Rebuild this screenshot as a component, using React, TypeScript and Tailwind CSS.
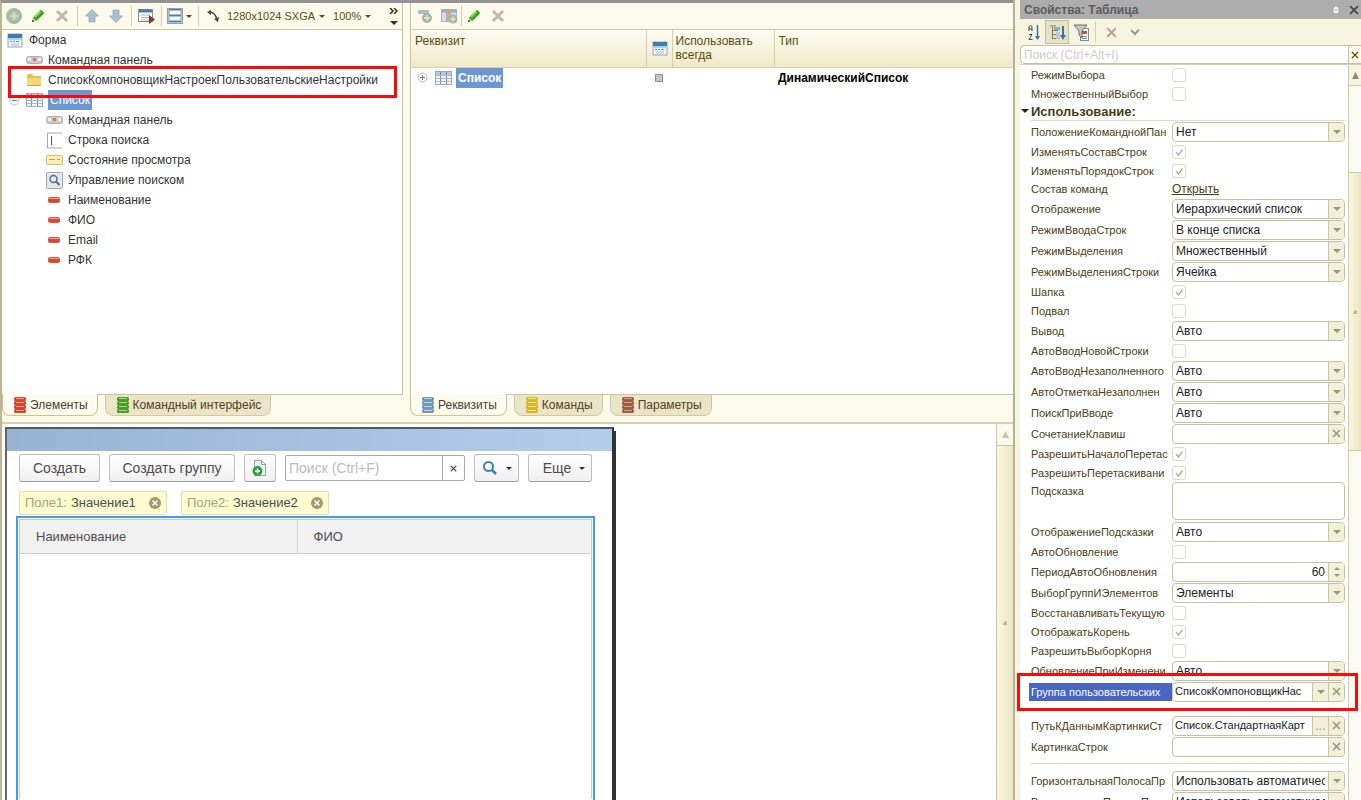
import type { ReactNode } from 'react';

type IconProps = { className?: string };

type Field = {
  kind: 'check' | 'select' | 'text' | 'number' | 'link' | 'area' | 'heading' | 'divider' | 'group' | 'path';
  label?: string;
  value?: string;
  checked?: boolean;
};

const fields: Field[] = [
  { kind: 'check', label: 'РежимВыбора' },
  { kind: 'check', label: 'МножественныйВыбор' },
  { kind: 'heading', label: 'Использование:' },
  { kind: 'select', label: 'ПоложениеКоманднойПан', value: 'Нет' },
  { kind: 'check', label: 'ИзменятьСоставСтрок', checked: true },
  { kind: 'check', label: 'ИзменятьПорядокСтрок', checked: true },
  { kind: 'link', label: 'Состав команд', value: 'Открыть' },
  { kind: 'select', label: 'Отображение', value: 'Иерархический список' },
  { kind: 'select', label: 'РежимВводаСтрок', value: 'В конце списка' },
  { kind: 'select', label: 'РежимВыделения', value: 'Множественный' },
  { kind: 'select', label: 'РежимВыделенияСтроки', value: 'Ячейка' },
  { kind: 'check', label: 'Шапка', checked: true },
  { kind: 'check', label: 'Подвал' },
  { kind: 'select', label: 'Вывод', value: 'Авто' },
  { kind: 'check', label: 'АвтоВводНовойСтроки' },
  { kind: 'select', label: 'АвтоВводНезаполненного', value: 'Авто' },
  { kind: 'select', label: 'АвтоОтметкаНезаполнен', value: 'Авто' },
  { kind: 'select', label: 'ПоискПриВводе', value: 'Авто' },
  { kind: 'text', label: 'СочетаниеКлавиш', value: '' },
  { kind: 'check', label: 'РазрешитьНачалоПеретас', checked: true },
  { kind: 'check', label: 'РазрешитьПеретаскивани', checked: true },
  { kind: 'area', label: 'Подсказка', value: '' },
  { kind: 'select', label: 'ОтображениеПодсказки', value: 'Авто' },
  { kind: 'check', label: 'АвтоОбновление' },
  { kind: 'number', label: 'ПериодАвтоОбновления', value: '60' },
  { kind: 'select', label: 'ВыборГруппИЭлементов', value: 'Элементы' },
  { kind: 'check', label: 'ВосстанавливатьТекущую' },
  { kind: 'check', label: 'ОтображатьКорень', checked: true },
  { kind: 'check', label: 'РазрешитьВыборКорня' },
  { kind: 'select', label: 'ОбновлениеПриИзменени', value: 'Авто' },
  { kind: 'group', label: 'Группа пользовательских', value: 'СписокКомпоновщикНас' },
  { kind: 'divider' },
  { kind: 'path', label: 'ПутьКДаннымКартинкиСт', value: 'Список.СтандартнаяКарт' },
  { kind: 'text', label: 'КартинкаСтрок', value: '' },
  { kind: 'divider' },
  { kind: 'select', label: 'ГоризонтальнаяПолосаПр', value: 'Использовать автоматическ' },
  { kind: 'select', label: 'ВертикальнаяПолосаПрок', value: 'Использовать автоматическ' },
];

function FormIcon({ className = 'h-4 w-4' }: IconProps) {
  return (
    <svg viewBox="0 0 16 16" className={className} aria-hidden="true">
      <rect x="1" y="2" width="14" height="13" fill="#edf3f8" stroke="#8fa9bd" />
      <rect x="1" y="2" width="14" height="4" fill="#3f7ca8" />
      <path d="M1 7h14" stroke="#a8d2ea" strokeWidth="2" />
      <path d="M3 9.500h2M6 9.500h2M9 9.500h3" stroke="#5c93ba" />
      <rect x="4" y="11" width="8" height="3" fill="#d5d9dd" />
    </svg>
  );
}

function CommandBarIcon() {
  return (
    <svg viewBox="0 0 17 8" className="h-2 w-[17px]" aria-hidden="true">
      <rect x="0.500" y="0.500" width="16" height="7" rx="2" fill="#c9c9c9" stroke="#b0b0b0" />
      <rect x="2" y="2" width="3" height="3" fill="#f5f5f5" />
      <rect x="7" y="2" width="3" height="3" fill="#ef6b52" />
      <rect x="12" y="2" width="3" height="3" fill="#f5f5f5" />
    </svg>
  );
}

function FolderIcon() {
  return (
    <svg viewBox="0 0 16 14" className="h-[14px] w-4" aria-hidden="true">
      <path d="M1 3l1-2h4l1.500 2H15v10H1z" fill="#e6bd50" />
      <path d="M1 5h14v8H1z" fill="#f5d777" />
      <path d="M1 12.500h14" stroke="#d9ab3c" />
    </svg>
  );
}

function TableIcon() {
  return (
    <svg viewBox="0 0 17 14" className="h-[14px] w-[17px]" aria-hidden="true">
      <rect x="0.500" y="0.500" width="16" height="13" fill="#f2f5f8" stroke="#9aaabb" />
      <path d="M1 1h15v3H1z" fill="#b8cbdd" />
      <path d="M5.500 1v12M11.500 1v12" stroke="#7489a0" />
      <path d="M1 4.500h15M1 7.500h15M1 10.500h15" stroke="#a9b8c8" />
    </svg>
  );
}

function SearchLineIcon() {
  return (
    <svg viewBox="0 0 17 17" className="h-[17px] w-[17px]" aria-hidden="true">
      <path d="M16 1H1.500v15H16" fill="none" stroke="#a9a9a9" />
      <path d="M5.500 4v9" stroke="#555" />
    </svg>
  );
}

function ViewStateIcon() {
  return (
    <svg viewBox="0 0 17 10" className="h-[10px] w-[17px]" aria-hidden="true">
      <rect x="0.500" y="0.500" width="16" height="9" rx="1.500" fill="#f8efb5" stroke="#d0bf7c" />
      <path d="M3 4.500h6M11 4.500h3" stroke="#b8a35c" />
    </svg>
  );
}

function MagnifierIcon({ className = 'h-4 w-4' }: IconProps) {
  return (
    <svg viewBox="0 0 16 16" className={className} fill="none" stroke="#3e82b5" aria-hidden="true">
      <circle cx="6.500" cy="6.500" r="4.500" strokeWidth="2" />
      <path d="M9.500 9.500l4.500 4.500" strokeWidth="2.500" />
    </svg>
  );
}

function SearchControlIcon() {
  return (
    <svg viewBox="0 0 17 17" className="h-[17px] w-[17px]" fill="none" aria-hidden="true">
      <rect x="0.500" y="0.500" width="16" height="16" rx="1" fill="#e8e8e8" stroke="#a3a3a3" />
      <circle cx="7.500" cy="7" r="3.500" stroke="#3f74a0" strokeWidth="1.500" />
      <path d="M10 9.500l3.500 3.500" stroke="#3f74a0" strokeWidth="2" />
    </svg>
  );
}

function FieldIcon() {
  return (
    <svg viewBox="0 0 12 6" className="h-[6px] w-3" aria-hidden="true">
      <rect x="0.500" y="0.500" width="11" height="5" rx="1" fill="#dc4430" stroke="#d85a48" />
      <path d="M1 1.500h10" stroke="#f59a87" />
    </svg>
  );
}

function StackIcon({ color, light }: { color: string; light: string }) {
  return (
    <svg viewBox="0 0 12 16" className="h-4 w-3 shrink-0" aria-hidden="true">
      {[0, 4, 8, 12].map((y) => (
        <g key={y}>
          <rect x="0" y={y} width="12" height="4" rx="1.500" fill={color} />
          <rect x="2" y={y + 1} width="8" height="1" fill={light} />
        </g>
      ))}
    </svg>
  );
}

function PencilIcon() {
  return (
    <svg viewBox="0 0 16 16" className="h-4 w-4" aria-hidden="true">
      <path d="M2 14l1.500-5L10 2.500q1-1 2 0l1.500 1.500q1 1 0 2L7 12.500z" fill="#37a31d" />
      <path d="M5 9l5.500-5.500" stroke="#8be069" strokeWidth="2" />
      <path d="M2 14l1.500-4L6 12.500z" fill="#dccd91" />
      <path d="M2 14l.7-2.200L4.200 13.300z" fill="#222" />
    </svg>
  );
}

function CrossIcon({ className = 'h-4 w-4 text-[#c9b3ad]' }: IconProps) {
  return (
    <svg viewBox="0 0 16 16" className={className} stroke="currentColor" fill="none" aria-hidden="true">
      <path d="M3 3l10 10M13 3L3 13" strokeWidth="3" />
    </svg>
  );
}

function ThinCross({ className = 'h-[9px] w-[9px] text-[#9a957d]' }: IconProps) {
  return (
    <svg viewBox="0 0 9 9" className={className} stroke="currentColor" fill="none" aria-hidden="true">
      <path d="M1 1l7 7M8 1L1 8" strokeWidth="1.500" />
    </svg>
  );
}

function Caret({ className = 'h-[3px] w-[6px] text-[#5c4a12]' }: IconProps) {
  return (
    <svg viewBox="0 0 6 3" preserveAspectRatio="none" className={className} fill="currentColor" aria-hidden="true">
      <path d="M0 0h6L3 3z" />
    </svg>
  );
}

function ArrowIcon({ down = false }: { down?: boolean }) {
  return (
    <svg viewBox="0 0 14 14" className="h-[14px] w-[14px]" aria-hidden="true">
      <path
        d={down ? 'M7 13.500L0.500 7H4V1h6v6h3.500z' : 'M7 .5L13.500 7H10v6H4V7H.5z'}
        fill="#a9bfce"
        stroke="#9db4c5"
      />
    </svg>
  );
}

function ExpandIcon({ open = false }: { open?: boolean }) {
  return (
    <svg viewBox="0 0 11 11" className="h-[11px] w-[11px] shrink-0" fill="none" stroke="#777" aria-hidden="true">
      <circle cx="5.500" cy="5.500" r="4.500" fill="#fafafa" stroke="#bdbdbd" />
      <path d={open ? 'M3 5.500h5' : 'M3 5.500h5M5.500 3v5'} />
    </svg>
  );
}

function Separator() {
  return <span className="h-5 w-px bg-[#d3ccae]" />;
}

function ToolButton({ label, children, className = 'w-6' }: { label: string; children: ReactNode; className?: string }) {
  return (
    <button type="button" aria-label={label} className={`flex h-6 shrink-0 items-center justify-center ${className}`}>
      {children}
    </button>
  );
}

function ElementsToolbar() {
  return (
    <div className="flex h-[27px] items-center border-b border-[#cfc9a8] bg-[#fcfaea] text-[11px] text-[#5c4a12]">
      <ToolButton label="Добавить">
        <svg viewBox="0 0 16 16" className="h-4 w-4" aria-hidden="true">
          <circle cx="8" cy="8" r="7.500" fill="#a9bba4" stroke="#a3b5a0" />
          <path d="M8 4v8M4 8h8" stroke="#d0dccb" strokeWidth="2.500" />
        </svg>
      </ToolButton>
      <ToolButton label="Изменить">
        <PencilIcon />
      </ToolButton>
      <ToolButton label="Удалить">
        <CrossIcon />
      </ToolButton>
      <span className="flex w-[6px] justify-center">
        <Separator />
      </span>
      <ToolButton label="Переместить вверх">
        <ArrowIcon />
      </ToolButton>
      <ToolButton label="Переместить вниз">
        <ArrowIcon down />
      </ToolButton>
      <span className="flex w-[6px] justify-center">
        <Separator />
      </span>
      <ToolButton label="Проверить форму">
        <svg viewBox="0 0 17 16" className="h-4 w-[17px]" aria-hidden="true">
          <rect x="0.500" y="1.500" width="14" height="12" fill="#fff" stroke="#7d8fa2" />
          <path d="M1 3h13" stroke="#517a9e" strokeWidth="3" />
          <path d="M3 7h9M3 9.500h9M3 12h9" stroke="#a9b6c3" />
          <path d="M11 7l6 4.500-6 4.500z" fill="#7b3f26" />
        </svg>
      </ToolButton>
      <span className="flex w-[6px] justify-center">
        <Separator />
      </span>
      <ToolButton label="Расположение" className="w-[31px] gap-[3px]">
        <svg viewBox="0 0 16 16" className="h-4 w-4" aria-hidden="true">
          <rect x="0.500" y="0.500" width="15" height="15" fill="#a9c0d6" stroke="#8ba2b8" />
          <path d="M2 1.500h12M2 7.500h12M2 13.500h12" stroke="#557a9f" />
          <rect x="3" y="3" width="10" height="3" fill="#fff" />
          <rect x="3" y="9" width="10" height="3" fill="#fff" />
        </svg>
        <Caret />
      </ToolButton>
      <span className="flex w-[6px] justify-center">
        <Separator />
      </span>
      <ToolButton label="Порядок обхода">
        <svg viewBox="0 0 14 14" className="h-[14px] w-[14px]" fill="none" stroke="#444" aria-hidden="true">
          <path d="M3 3c5 0 7 3 8 8" strokeWidth="1.500" />
          <path d="M5 1v5L1 3zM13 8l-1 5-4-3z" fill="#444" stroke="none" />
        </svg>
      </ToolButton>
      <button type="button" className="ml-[2px] flex items-center gap-1 whitespace-nowrap">
        1280x1024 SXGA
        <Caret />
      </button>
      <button type="button" className="ml-2 flex items-center gap-1">
        100%
        <Caret />
      </button>
      <button type="button" aria-label="Ещё команды" className="mr-1 ml-auto flex flex-col items-center gap-[7px]">
        <svg viewBox="0 0 9 6" className="h-[6px] w-[9px]" fill="none" stroke="#3b300c" aria-hidden="true">
          <path d="M1 0l3 3-3 3M5 0l3 3-3 3" strokeWidth="1.500" />
        </svg>
        <Caret className="h-1 w-2 text-[#3b300c]" />
      </button>
    </div>
  );
}

const treeItems = [
  { label: 'Командная панель', icon: <CommandBarIcon /> },
  { label: 'Строка поиска', icon: <SearchLineIcon /> },
  { label: 'Состояние просмотра', icon: <ViewStateIcon /> },
  { label: 'Управление поиском', icon: <SearchControlIcon /> },
  { label: 'Наименование', icon: <FieldIcon /> },
  { label: 'ФИО', icon: <FieldIcon /> },
  { label: 'Email', icon: <FieldIcon /> },
  { label: 'РФК', icon: <FieldIcon /> },
];

function TreeRow({ icon, label, className }: { icon: ReactNode; label: string; className: string }) {
  return (
    <li className={`flex h-5 items-center gap-1 whitespace-nowrap ${className}`}>
      <span className="flex w-5 shrink-0 justify-center">{icon}</span>
      {label}
    </li>
  );
}

function ElementsTree() {
  return (
    <ul className="flex-1 border-b border-[#c9c3a2] bg-white text-[12px] text-[#333]">
      <TreeRow icon={<FormIcon />} label="Форма" className="pl-[3px]" />
      <TreeRow icon={<CommandBarIcon />} label="Командная панель" className="pl-[22px]" />
      <li className="relative flex h-5 items-center gap-1 pl-[22px]">
        <span className="flex w-5 shrink-0 justify-center">
          <FolderIcon />
        </span>
        СписокКомпоновщикНастроекПользовательскиеНастройки
        <span className="pointer-events-none absolute -top-1 right-[5px] left-[6px] z-10 h-8 border-3 border-[#fb0a0a]" />
      </li>
      <li className="flex h-5 items-center pl-[7px]">
        <ExpandIcon open />
        <span className="flex w-7 shrink-0 justify-center">
          <TableIcon />
        </span>
        <span className="bg-[#6d97d3] px-[2px] leading-5 text-white">Список</span>
      </li>
      {treeItems.map((item) => (
        <TreeRow key={item.label} icon={item.icon} label={item.label} className="pl-[42px]" />
      ))}
    </ul>
  );
}

function PaneTab({ active, icon, children }: { active?: boolean; icon: ReactNode; children: ReactNode }) {
  return (
    <button
      type="button"
      role="tab"
      aria-selected={!!active}
      className={
        active
          ? 'relative -top-px flex h-[22px] items-center gap-1 rounded-b-lg border border-t-0 border-[#c9bd90] border-b-[#e3c07a] bg-[#fefcf0] pr-[9px] pl-[11px]'
          : 'flex h-[21px] items-center gap-1 rounded-b-lg border border-t-0 border-[#cfc9a8] bg-[#ebe5c8] pr-[9px] pl-[11px]'
      }
    >
      {icon}
      {children}
    </button>
  );
}

function AttributesPane() {
  return (
    <section className="flex min-w-0 flex-1 flex-col">
      <div className="flex h-[392px] flex-col border-l border-[#c9c3a2]">
        <div className="flex h-[27px] shrink-0 items-center border-b border-[#cfc9a8] bg-[#fcfaea] pl-[2px]">
          <ToolButton label="Добавить колонку">
            <svg viewBox="0 0 16 16" className="h-4 w-4" aria-hidden="true">
              <rect x="1" y="2" width="11" height="4" rx="1" fill="#a9bccb" />
              <circle cx="10" cy="10" r="5" fill="#a4b7a1" />
              <path d="M10 7v6M7 10h6" stroke="#e0e8dc" strokeWidth="1.500" />
            </svg>
          </ToolButton>
          <ToolButton label="Добавить таблицу">
            <svg viewBox="0 0 17 16" className="h-4 w-[17px]" aria-hidden="true">
              <rect x="0.500" y="1.500" width="15" height="12" fill="#d9dce0" stroke="#a9b3bd" />
              <path d="M1 3h15" stroke="#9aaebf" strokeWidth="3" />
              <path d="M5 1h5v13H5z" fill="#c9a6a2" />
              <circle cx="12" cy="11" r="4.500" fill="#a4b7a1" />
              <path d="M12 8.500v5M9.500 11h5" stroke="#e0e8dc" strokeWidth="1.500" />
            </svg>
          </ToolButton>
          <Separator />
          <ToolButton label="Изменить реквизит">
            <PencilIcon />
          </ToolButton>
          <ToolButton label="Удалить реквизит">
            <CrossIcon />
          </ToolButton>
        </div>
        <div className="flex-1 border-b border-[#c9c3a2] bg-white">
          <table className="w-full table-fixed border-collapse text-left text-[12px]">
            <colgroup>
              <col className="w-[235px]" />
              <col className="w-[26px]" />
              <col className="w-[102px]" />
              <col />
            </colgroup>
            <thead>
              <tr className="h-[37px] bg-linear-to-b from-[#fdfcf2] to-[#efe9c8] align-top leading-[14px] text-[#5c4a12]">
                <th className="border-r border-b border-[#d6cfac] px-1 pt-[4px] font-normal">Реквизит</th>
                <th className="border-r border-b border-[#d6cfac] pt-[10px] pl-[5px]" aria-label="Форма">
                  <FormIcon />
                </th>
                <th className="border-r border-b border-[#d6cfac] px-[3px] pt-[4px] font-normal">Использовать всегда</th>
                <th className="border-b border-[#d6cfac] px-1 pt-[4px] font-normal">Тип</th>
              </tr>
            </thead>
            <tbody>
              <tr className="h-5">
                <td>
                  <span className="flex items-center pl-[6px]">
                    <ExpandIcon />
                    <span className="flex w-6 justify-end">
                      <TableIcon />
                    </span>
                    <b className="ml-1 bg-[#6d97d3] px-[2px] leading-5 text-white">Список</b>
                  </span>
                </td>
                <td>
                  <span className="mx-auto block h-2 w-2 border border-[#8f8f8f] bg-[#c8c8c8]" />
                </td>
                <td />
                <td className="px-1 font-bold text-black">ДинамическийСписок</td>
              </tr>
            </tbody>
          </table>
        </div>
      </div>
      <div role="tablist" className="flex gap-[7px] text-[12px] text-[#4d4226]">
        <PaneTab active icon={<StackIcon color="#7396b2" light="#c3d8e6" />}>
          Реквизиты
        </PaneTab>
        <PaneTab icon={<StackIcon color="#d9b52c" light="#fbeb8c" />}>Команды</PaneTab>
        <PaneTab icon={<StackIcon color="#9a5e42" light="#d3a78f" />}>Параметры</PaneTab>
      </div>
    </section>
  );
}

const previewButton =
  'flex h-7 shrink-0 items-center justify-center rounded-[3px] border border-[#bdbdbd] border-b-[#9c9c9c] bg-linear-to-b from-white to-[#f0f0f0]';

function FilterTag({ name, value }: { name: string; value: string }) {
  return (
    <span className="flex h-6 w-[148px] items-center rounded-[2px] border border-[#e6dfa6] bg-[#fefbd0] pl-[5px] text-[13px]">
      <span className="text-[#a8a27c]">{name}:</span>
      <span className="ml-1">{value}</span>
      <button type="button" aria-label={`Убрать ${name}`} className="mr-1 ml-auto">
        <svg viewBox="0 0 14 14" className="h-[14px] w-[14px]" aria-hidden="true">
          <circle cx="7" cy="7" r="6" fill="#a39969" />
          <path d="M4.500 4.500l5 5M9.500 4.500l-5 5" stroke="#fff" strokeWidth="1.500" />
        </svg>
      </button>
    </span>
  );
}

function FormPreview() {
  return (
    <div className="relative flex w-[609px] flex-col border-t-2 border-r-2 border-l-2 border-t-[#4f5963] border-r-[#333] border-l-[#666] bg-white text-[14px] text-[#4d4d4d]">
      <span className="absolute top-[2px] -right-1 bottom-0 w-[2px] bg-[#333]" />
      <div className="h-[22px] bg-linear-to-r from-[#99b3d3] to-[#b4cde9]" />
      <div className="mt-[3px] flex items-center pl-3">
        <button type="button" className={`${previewButton} w-[81px]`}>
          Создать
        </button>
        <button type="button" className={`${previewButton} ml-[9px] w-[126px]`}>
          Создать группу
        </button>
        <button type="button" aria-label="Создать копированием" className={`${previewButton} ml-[9px] w-8`}>
          <svg viewBox="0 0 16 17" className="h-[17px] w-4" aria-hidden="true">
            <path d="M2.500 0.500h7l4 4v11h-11z" fill="#eef2f5" stroke="#8ba0b2" />
            <path d="M9.500 .5v4h4" fill="none" stroke="#8ba0b2" />
            <circle cx="5.500" cy="11" r="5" fill="#28a13c" />
            <path d="M5.500 8.500v5M3 11h5" stroke="#fff" strokeWidth="1.500" />
          </svg>
        </button>
        <div className="ml-[9px] flex h-[26px] w-[180px] items-center rounded-[2px] border border-[#a9a9a9]">
          <input
            type="text"
            aria-label="Поиск"
            placeholder="Поиск (Ctrl+F)"
            className="w-0 flex-1 bg-transparent px-[3px] outline-none placeholder:text-[#bcbcbc]"
          />
          <button type="button" aria-label="Очистить поиск" className="flex h-full w-[22px] items-center justify-center border-l border-[#a9a9a9]">
            <ThinCross className="h-[7px] w-[7px] text-[#555]" />
          </button>
        </div>
        <button type="button" aria-label="Найти" className={`${previewButton} ml-[9px] w-[45px] gap-2`}>
          <MagnifierIcon />
          <Caret className="h-[3px] w-[6px] text-[#333]" />
        </button>
        <button type="button" className={`${previewButton} ml-[9px] w-[64px] gap-2 pl-2`}>
          Еще
          <Caret className="h-[3px] w-[6px] text-[#333]" />
        </button>
      </div>
      <div className="mt-[9px] flex gap-[14px] pl-3">
        <FilterTag name="Поле1" value="Значение1" />
        <FilterTag name="Поле2" value="Значение2" />
      </div>
      <div className="mt-px mr-[17px] ml-[9px] flex-1 border-2 border-b-0 border-[#3c9df7] p-px">
        <div className="h-full border border-b-0 border-[#c9c9c9]">
          <table className="w-full table-fixed border-collapse text-left text-[13px]">
            <thead>
              <tr className="h-[33px] border-b border-[#cfcfcf] bg-[#f1f1f1]">
                <th className="w-[277px] border-r border-[#d6d6d6] px-4 font-normal">Наименование</th>
                <th className="px-4 font-normal">ФИО</th>
              </tr>
            </thead>
          </table>
        </div>
      </div>
    </div>
  );
}

function DropArrow({ edge = 'rounded-r-[3px]' }: { edge?: string }) {
  return (
    <span className={`pointer-events-none flex h-full w-4 shrink-0 items-center justify-center border-l border-[#cbc6a4] bg-[#f3f0da] ${edge}`}>
      <Caret className="h-1 w-2 text-[#9b9679]" />
    </span>
  );
}

const box = 'relative flex h-5 items-center rounded-[4px] border border-[#c6c1a0] bg-white text-[#222]';
const sideButton = 'flex h-full w-4 shrink-0 items-center justify-center border-l border-[#cbc6a4] bg-[#f3f0da]';

function FieldControl({ field, id }: { field: Field; id: string }) {
  switch (field.kind) {
    case 'check':
      return (
        <span className="relative block h-[14px] w-[14px]">
          <input
            id={id}
            type="checkbox"
            defaultChecked={field.checked}
            className="peer block h-[14px] w-[14px] appearance-none rounded-[3px] border border-[#dedac4] bg-white"
          />
          <svg
            viewBox="0 0 14 14"
            className="pointer-events-none absolute inset-0 hidden peer-checked:block"
            fill="none"
            stroke="#b5b3a8"
            aria-hidden="true"
          >
            <path d="M4 7l2.500 3L10.500 4.500" strokeWidth="1.500" />
          </svg>
        </span>
      );
    case 'link':
      return (
        <a id={id} href="#" className="text-[#4a3d12] underline">
          {field.value}
        </a>
      );
    case 'area':
      return <textarea id={id} className="block h-[38px] w-full resize-none rounded-[4px] border border-[#c6c1a0] bg-white" />;
    case 'text':
      return (
        <span className={box}>
          <input id={id} type="text" defaultValue={field.value} className="w-0 flex-1 px-[3px] outline-none" />
          <button type="button" aria-label="Очистить" className={`${sideButton} rounded-r-[3px]`}>
            <ThinCross />
          </button>
        </span>
      );
    case 'number':
      return (
        <span className={box}>
          <input id={id} type="text" inputMode="numeric" defaultValue={field.value} className="w-0 flex-1 px-[3px] text-right outline-none" />
          <span className={`${sideButton} flex-col gap-1 rounded-r-[3px]`}>
            <Caret className="h-[3px] w-[6px] rotate-180 text-[#9b9679]" />
            <Caret className="h-[3px] w-[6px] text-[#9b9679]" />
          </span>
        </span>
      );
    case 'group':
      return (
        <span className={box}>
          <select id={id} className="w-0 flex-1 appearance-none px-[2px] text-[11px] outline-none">
            <option>{field.value}</option>
          </select>
          <DropArrow edge="" />
          <button type="button" aria-label="Очистить" className={`${sideButton} rounded-r-[3px]`}>
            <ThinCross />
          </button>
        </span>
      );
    case 'path':
      return (
        <span className={box}>
          <input id={id} type="text" defaultValue={field.value} className="w-0 flex-1 px-[2px] text-[11px] outline-none" />
          <button type="button" className={`${sideButton} text-[#8f8a6c]`}>
            ...
          </button>
          <button type="button" aria-label="Очистить" className={`${sideButton} rounded-r-[3px]`}>
            <ThinCross />
          </button>
        </span>
      );
    default:
      return (
        <span className={box}>
          <select id={id} className="w-0 flex-1 appearance-none px-[3px] outline-none">
            <option>{field.value}</option>
          </select>
          <DropArrow />
        </span>
      );
  }
}

function FieldRow({ field, index }: { field: Field; index: number }) {
  const id = `property-${index}`;

  if (field.kind === 'divider') {
    return (
      <div className="flex h-[13px] items-center">
        <hr className="w-full border-[#e0dbc0]" />
      </div>
    );
  }

  if (field.kind === 'heading') {
    return (
      <h3 className="relative h-[18px] border-b border-[#e0dbc0] text-[13px] leading-[17px] font-bold">
        <Caret className="absolute top-[6px] -left-[10px] h-1 w-2 text-[#222]" />
        {field.label}
      </h3>
    );
  }

  const heights = { check: 'h-[19px] items-center', link: 'h-[18px] items-center', area: 'h-[39px] items-start' };
  const height = heights[field.kind as keyof typeof heights] ?? 'h-[21px] items-center';

  return (
    <div className={`relative flex ${height}`}>
      <label
        htmlFor={id}
        className={
          field.kind === 'group'
            ? '-ml-[2px] w-[143px] shrink-0 overflow-hidden bg-[#4a66c4] pl-[2px] text-[11px] leading-[18px] whitespace-nowrap text-white'
            : 'mr-[1px] w-[140px] shrink-0 overflow-hidden text-[11px] leading-[18px] whitespace-nowrap'
        }
      >
        {field.label}
      </label>
      <div className="min-w-0 flex-1">
        <FieldControl field={field} id={id} />
      </div>
      {field.kind === 'group' && (
        <span className="pointer-events-none absolute -top-2 -right-[13px] -left-[14px] z-10 h-[38px] border-3 border-[#fb0a0a]" />
      )}
    </div>
  );
}

function PropertyPanel() {
  return (
    <aside className="flex w-[348px] shrink-0 flex-col border-l-2 border-[#b8b294] bg-[#f7f4df] pl-[5px] text-[12px] text-[#4a3d12]">
      <header className="flex h-[19px] shrink-0 items-center bg-[#adadad] pl-1 text-[#5c5c5c]">
        <h2 className="text-[12px] font-bold">Свойства: Таблица</h2>
        <button type="button" aria-label="Закрепить" className="ml-auto">
          <svg viewBox="0 0 6 8" className="h-2 w-[6px]" aria-hidden="true">
            <ellipse cx="3" cy="4" rx="2.500" ry="3.500" fill="#eee" />
            <path d="M3 3v2" stroke="#999" />
          </svg>
        </button>
        <button type="button" aria-label="Закрыть" className="mr-[2px] ml-[10px]">
          <ThinCross className="h-[10px] w-[10px] text-[#444]" />
        </button>
      </header>
      <div className="flex h-[26px] shrink-0 items-center pl-[3px]">
        <ToolButton label="По алфавиту" className="w-[22px]">
          <svg viewBox="0 0 14 17" className="h-[17px] w-[14px]" fill="none" stroke="#444" aria-hidden="true">
            <path d="M2 7V2.500Q3.500 .5 5 2.500V7M2 5h3M2 10.500h3L2 15.500h3.500" />
            <path d="M10.500 1v14" stroke="#3478a8" strokeWidth="1.500" />
            <path d="M8 12h5l-2.500 4z" fill="#3478a8" stroke="none" />
          </svg>
        </ToolButton>
        <ToolButton label="По категориям" className="w-6 border border-[#c4bd98] bg-[#e8e2c4]">
          <svg viewBox="0 0 17 17" className="h-[17px] w-[17px]" fill="none" aria-hidden="true">
            <path d="M1 2h6M3.500 3v12M3 6.500h6M3 10.500h6M3 14.500h6" stroke="#7a7f70" />
            <rect x="5" y="3" width="6" height="3" fill="#8fb0c4" />
            <rect x="7" y="8" width="4" height="7" fill="#b9cbd4" />
            <path d="M14 2v12" stroke="#3478a8" strokeWidth="2" />
            <path d="M11 11h6l-3 5z" fill="#3478a8" />
          </svg>
        </ToolButton>
        <ToolButton label="Только важные">
          <svg viewBox="0 0 17 17" className="h-[17px] w-[17px]" aria-hidden="true">
            <rect x="7.500" y="4.500" width="8" height="12" fill="#fff" stroke="#6c91b5" />
            <path d="M9 12.500h5M9 14.500h5" stroke="#6c91b5" />
            <path d="M9 7h5v3H9z" fill="#e0462e" />
            <path d="M1 1h13L9 7v7l-3-3V7z" fill="#c4c6c8" stroke="#6b6f73" />
          </svg>
        </ToolButton>
        <span className="ml-[2px] flex">
          <Separator />
        </span>
        <ToolButton label="Отменить" className="ml-[3px] w-6">
          <ThinCross className="h-[11px] w-[11px] text-[#b29a93]" />
        </ToolButton>
        <ToolButton label="Применить">
          <svg viewBox="0 0 10 8" className="h-2 w-[10px]" fill="none" stroke="#8ba583" aria-hidden="true">
            <path d="M1 2l4 4 4-4.500" strokeWidth="2" />
          </svg>
        </ToolButton>
      </div>
      <div className="flex h-[19px] shrink-0 rounded-l-[5px] border border-r-0 border-[#c6c1a0] bg-white">
        <input
          type="text"
          aria-label="Поиск свойства"
          placeholder="Поиск (Ctrl+Alt+I)"
          className="w-0 flex-1 px-[3px] outline-none placeholder:text-[#cfccc4]"
        />
        <button type="button" aria-label="Очистить" className="flex w-[13px] items-center justify-center border-l border-[#c6c1a0] bg-[#fcfaea]">
          <ThinCross className="h-2 w-2 text-[#5c4500]" />
        </button>
      </div>
      <div className="flex min-h-0 flex-1 border-t border-[#d6cfac]">
        <form className="min-w-0 flex-1 bg-white pr-[3px] pl-[11px]">
          {fields.map((field, index) => (
            <FieldRow key={index} field={field} index={index} />
          ))}
        </form>
        <div className="flex w-[13px] shrink-0 flex-col border-l border-[#d0caa9] bg-[#faf9f2]">
          <div className="flex h-[21px] items-center justify-center border-b border-[#d0caa9] bg-[#f7f4df]">
            <Caret className="h-[7px] w-[7px] rotate-180 text-[#8f8b78]" />
          </div>
          <div className="mt-[86px] flex h-[279px] items-center justify-center border-y border-[#cfc9a4] bg-linear-to-r from-[#f9f6e2] to-[#ebe5c0]">
            <span className="h-1 w-1 rounded-tl-full bg-[#c4bd98]" />
          </div>
        </div>
      </div>
    </aside>
  );
}

export default function App() {
  return (
    <div className="flex h-screen overflow-hidden bg-[#fcfaea] font-['Liberation_Sans',Arial,sans-serif]">
      <main className="flex min-w-0 flex-1 flex-col border-t-3 border-l-2 border-t-[#929292] border-l-[#bdb595]">
        <div className="flex shrink-0 gap-[7px] border-b-2 border-[#d6d0b0] pb-[5px]">
          <section className="flex w-[401px] shrink-0 flex-col">
            <div className="flex h-[392px] flex-col border-r border-[#c9c3a2]">
              <ElementsToolbar />
              <ElementsTree />
            </div>
            <div role="tablist" className="flex gap-[7px] text-[12px] text-[#4d4226]">
              <PaneTab active icon={<StackIcon color="#d9432c" light="#f7a28f" />}>
                Элементы
              </PaneTab>
              <PaneTab icon={<StackIcon color="#4a9c2b" light="#a5dc88" />}>Командный интерфейс</PaneTab>
            </div>
          </section>
          <AttributesPane />
        </div>
        <div className="flex min-h-0 flex-1 bg-white">
          <div className="flex flex-1 pt-[3px] pl-[3px]">
            <FormPreview />
          </div>
          <div className="flex w-[17px] shrink-0 flex-col border-l border-[#c9c3a2]">
            <div className="flex h-[22px] items-center justify-center border-b border-[#c9c3a2] bg-[#fcfaea]">
              <Caret className="h-[7px] w-[7px] rotate-180 text-[#c9c5b2]" />
            </div>
            <div className="flex flex-1 items-center justify-center bg-linear-to-r from-[#faf7e4] to-[#ebe5c0]">
              <span className="h-1 w-1 rounded-tl-full bg-[#c4bd98]" />
            </div>
          </div>
        </div>
      </main>
      <PropertyPanel />
    </div>
  );
}
